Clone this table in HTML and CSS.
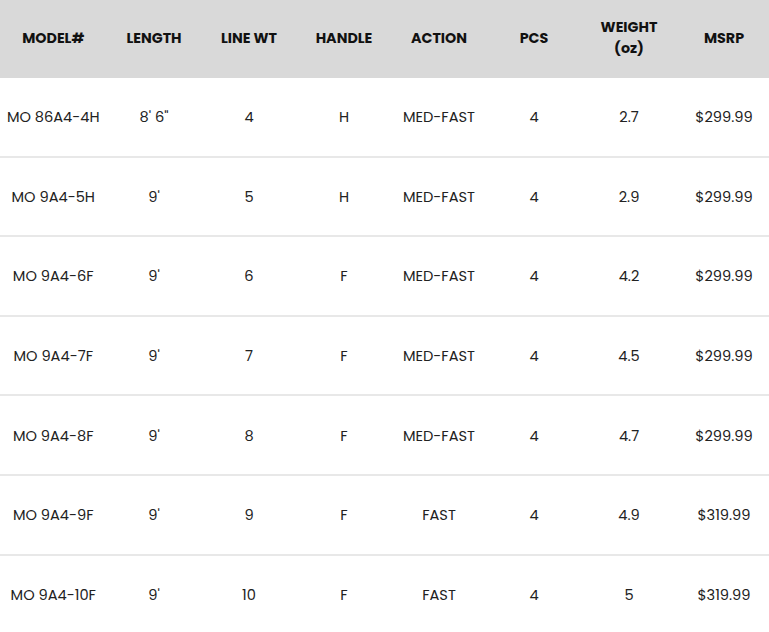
FILE: index.html
```html
<!DOCTYPE html>
<html>
<head>
<meta charset="utf-8">
<link rel="stylesheet" href="styles.css">
</head>
<body>
<table class="specs">
  <colgroup>
    <col class="c1"><col class="cn"><col class="cn"><col class="cn"><col class="cn"><col class="cn"><col class="cn"><col class="cn">
  </colgroup>
  <thead>
    <tr>
      <th>MODEL#</th><th>LENGTH</th><th>LINE WT</th><th>HANDLE</th><th>ACTION</th><th>PCS</th><th>WEIGHT<br>(oz)</th><th>MSRP</th>
    </tr>
  </thead>
  <tbody>
    <tr><td>MO 86A4-4H</td><td>8' 6"</td><td>4</td><td>H</td><td>MED-FAST</td><td>4</td><td>2.7</td><td>$299.99</td></tr>
    <tr><td>MO 9A4-5H</td><td>9'</td><td>5</td><td>H</td><td>MED-FAST</td><td>4</td><td>2.9</td><td>$299.99</td></tr>
    <tr><td>MO 9A4-6F</td><td>9'</td><td>6</td><td>F</td><td>MED-FAST</td><td>4</td><td>4.2</td><td>$299.99</td></tr>
    <tr><td>MO 9A4-7F</td><td>9'</td><td>7</td><td>F</td><td>MED-FAST</td><td>4</td><td>4.5</td><td>$299.99</td></tr>
    <tr><td>MO 9A4-8F</td><td>9'</td><td>8</td><td>F</td><td>MED-FAST</td><td>4</td><td>4.7</td><td>$299.99</td></tr>
    <tr><td>MO 9A4-9F</td><td>9'</td><td>9</td><td>F</td><td>FAST</td><td>4</td><td>4.9</td><td>$319.99</td></tr>
    <tr><td>MO 9A4-10F</td><td>9'</td><td>10</td><td>F</td><td>FAST</td><td>4</td><td>5</td><td>$319.99</td></tr>
  </tbody>
</table>
</body>
</html>
```
FILE: styles.css
```css
html, body {
  margin: 0;
  padding: 0;
  background: #ffffff;
  overflow: hidden;
}
body {
  font-family: "Poppins", "Open Sans", "Noto Sans", sans-serif;
  color: #222222;
}
.specs {
  width: 771.5px;
  border-collapse: collapse;
  table-layout: fixed;
}
.c1 { width: 106.5px; }
.cn { width: 95px; }
.specs th {
  height: 76px;
  padding: 0 0 2px;
  background: #d9d9d9;
  color: #111111;
  font-size: 14.3px;
  font-weight: 700;
  line-height: 21px;
  text-align: center;
  vertical-align: middle;
}
.specs td {
  height: 75.6px;
  padding: 2px 0 0;
  font-size: 14.6px;
  font-weight: 400;
  text-align: center;
  vertical-align: middle;
  border-bottom: 2px solid #e8e8e8;
  white-space: nowrap;
}
```
